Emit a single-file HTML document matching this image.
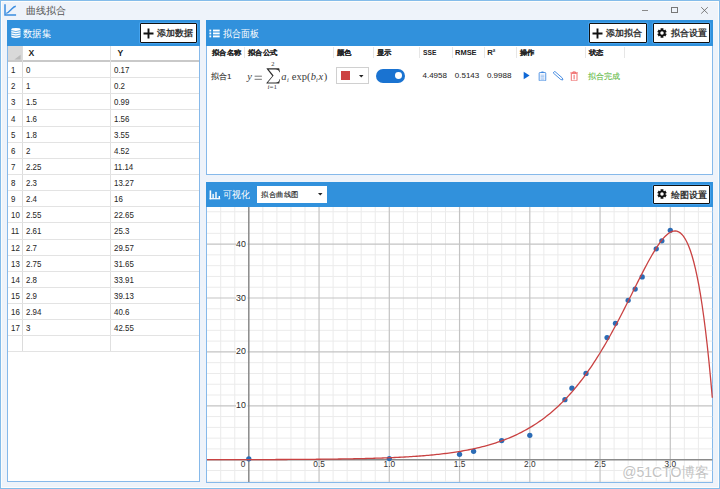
<!DOCTYPE html>
<html><head><meta charset="utf-8">
<style>
*{margin:0;padding:0;box-sizing:border-box}
html,body{width:720px;height:489px;overflow:hidden}
body{position:relative;background:#eef3fa;font-family:"Liberation Sans",sans-serif;color:#333}
.a{position:absolute}
.win{left:0;top:0;width:720px;height:489px;border:1px solid #84bcea;box-shadow:inset 0 0 0 1px #fdfdfb}
.title{left:25.5px;top:4px;font-size:9.5px;color:#555;line-height:13px}
.panel{background:#fff;border:1px solid #86b9ea}
.hdr{background:#3191dc;color:#fff}
.htxt{font-size:10px;line-height:12px;color:#fff}
.btn{background:#fff;border:1.7px solid #121212;border-radius:1px;box-shadow:0 0 0 1px #45a3ee;font-size:9.5px;line-height:15px;color:#222;font-weight:bold}
.th{font-weight:bold;font-size:8px;color:#222}
.td{font-size:8.5px;color:#2a2a2a;-webkit-text-stroke-width:0.05px}
.tv{transform:scaleX(0.93);transform-origin:0 0}
.hl{height:1px;background:#e3e3e3}
.vl{width:1px;background:#e3e3e3}
svg line.mi{stroke:#ebebeb;stroke-width:1}
svg line.ma{stroke:#c3c3c3;stroke-width:1.2}
svg line.ax{stroke:#8a8a8a;stroke-width:1.5}
svg polyline.cv{fill:none;stroke:#c94242;stroke-width:1.3}
svg circle{fill:#2c6cb5}
</style></head><body>
<div class="a win"></div>
<svg class="a" style="left:3px;top:3px" width="15" height="15" viewBox="0 0 15 15"><path d="M2 1.3V12.1H13.1" fill="none" stroke="#3a8de0" stroke-width="1.5"/><path d="M3.2 10.4C5.2 10.1 6.6 8 8.2 6.4S11 3.4 12.8 3.2" fill="none" stroke="#3a8de0" stroke-width="1.4"/></svg>
<div class="a title">曲线拟合</div>
<div class="a" style="left:642px;top:9.6px;width:6px;height:1.2px;background:#8a8a8a"></div>
<div class="a" style="left:671.2px;top:7.3px;width:6.8px;height:6px;border:1px solid #777"></div>
<svg class="a" style="left:700px;top:6px" width="10" height="10" viewBox="0 0 10 10"><path d="M1.2 1.2L7.8 7.6M7.8 1.2L1.2 7.6" stroke="#666" stroke-width="0.85"/></svg>
<div class="a panel" style="left:7px;top:20px;width:193px;height:462px"></div>
<div class="a hdr" style="left:7px;top:20px;width:193px;height:25.5px"></div>
<svg class="a" style="left:10.5px;top:28px" width="10" height="10" viewBox="0 0 10 10"><path d="M0.3 1.5A4.6 1.45 0 0 1 9.5 1.5V8.5A4.6 1.45 0 0 1 0.3 8.5Z" fill="#fff"/><path d="M0.2 2.5Q4.9 4.6 9.6 2.5M0.2 4.9Q4.9 6.6 9.6 4.9M0.2 7.2Q4.9 9 9.6 7.2" fill="none" stroke="#3191dc" stroke-width="0.75"/></svg>
<div class="a htxt" style="left:23.2px;top:27.8px;font-size:10px;transform:scaleX(0.93);transform-origin:0 0">数据集</div>
<div class="a btn" style="left:140px;top:23px;width:57px;height:19.5px"></div>
<svg class="a" style="left:143px;top:28px" width="11" height="11" viewBox="0 0 11 11"><path d="M5.5 0.5V10.5M0.5 5.5H10.5" stroke="#111" stroke-width="1.9"/></svg>
<div class="a" style="left:157.2px;top:26.7px;font-size:9px;line-height:12px;color:#333;font-weight:bold">添加数据</div>
<div class="a" style="left:8px;top:45.5px;width:14.5px;height:15px;background:#d9d9d9"></div>
<svg class="a" style="left:14px;top:54px" width="7" height="6" viewBox="0 0 7 6"><path d="M6.6 0.7V5.6H0.4Z" fill="#bababa"/></svg>
<div class="a" style="left:8px;top:60px;width:191px;height:1.6px;background:#c9c9c9"></div>
<div class="a th" style="left:28.6px;top:47.6px;font-size:8.6px">X</div>
<div class="a th" style="left:117.4px;top:47.6px;font-size:8.6px">Y</div>
<div class="a vl" style="left:22px;top:45.5px;height:306px;background:#dcdcdc"></div>
<div class="a vl" style="left:110px;top:45.5px;height:306px;background:#e0e0e0"></div>
<div class="a hl" style="left:8px;top:77.20px;width:191px"></div>
<div class="a td tv" style="left:10.6px;top:65.17px">1</div>
<div class="a td tv" style="left:25.8px;top:65.17px">0</div>
<div class="a td tv" style="left:113.8px;top:65.17px">0.17</div>
<div class="a hl" style="left:8px;top:93.33px;width:191px"></div>
<div class="a td tv" style="left:10.6px;top:81.30px">2</div>
<div class="a td tv" style="left:25.8px;top:81.30px">1</div>
<div class="a td tv" style="left:113.8px;top:81.30px">0.2</div>
<div class="a hl" style="left:8px;top:109.46px;width:191px"></div>
<div class="a td tv" style="left:10.6px;top:97.43px">3</div>
<div class="a td tv" style="left:25.8px;top:97.43px">1.5</div>
<div class="a td tv" style="left:113.8px;top:97.43px">0.99</div>
<div class="a hl" style="left:8px;top:125.59px;width:191px"></div>
<div class="a td tv" style="left:10.6px;top:113.56px">4</div>
<div class="a td tv" style="left:25.8px;top:113.56px">1.6</div>
<div class="a td tv" style="left:113.8px;top:113.56px">1.56</div>
<div class="a hl" style="left:8px;top:141.72px;width:191px"></div>
<div class="a td tv" style="left:10.6px;top:129.69px">5</div>
<div class="a td tv" style="left:25.8px;top:129.69px">1.8</div>
<div class="a td tv" style="left:113.8px;top:129.69px">3.55</div>
<div class="a hl" style="left:8px;top:157.85px;width:191px"></div>
<div class="a td tv" style="left:10.6px;top:145.82px">6</div>
<div class="a td tv" style="left:25.8px;top:145.82px">2</div>
<div class="a td tv" style="left:113.8px;top:145.82px">4.52</div>
<div class="a hl" style="left:8px;top:173.98px;width:191px"></div>
<div class="a td tv" style="left:10.6px;top:161.95px">7</div>
<div class="a td tv" style="left:25.8px;top:161.95px">2.25</div>
<div class="a td tv" style="left:113.8px;top:161.95px">11.14</div>
<div class="a hl" style="left:8px;top:190.11px;width:191px"></div>
<div class="a td tv" style="left:10.6px;top:178.08px">8</div>
<div class="a td tv" style="left:25.8px;top:178.08px">2.3</div>
<div class="a td tv" style="left:113.8px;top:178.08px">13.27</div>
<div class="a hl" style="left:8px;top:206.24px;width:191px"></div>
<div class="a td tv" style="left:10.6px;top:194.21px">9</div>
<div class="a td tv" style="left:25.8px;top:194.21px">2.4</div>
<div class="a td tv" style="left:113.8px;top:194.21px">16</div>
<div class="a hl" style="left:8px;top:222.37px;width:191px"></div>
<div class="a td tv" style="left:10.6px;top:210.34px">10</div>
<div class="a td tv" style="left:25.8px;top:210.34px">2.55</div>
<div class="a td tv" style="left:113.8px;top:210.34px">22.65</div>
<div class="a hl" style="left:8px;top:238.50px;width:191px"></div>
<div class="a td tv" style="left:10.6px;top:226.47px">11</div>
<div class="a td tv" style="left:25.8px;top:226.47px">2.61</div>
<div class="a td tv" style="left:113.8px;top:226.47px">25.3</div>
<div class="a hl" style="left:8px;top:254.63px;width:191px"></div>
<div class="a td tv" style="left:10.6px;top:242.60px">12</div>
<div class="a td tv" style="left:25.8px;top:242.60px">2.7</div>
<div class="a td tv" style="left:113.8px;top:242.60px">29.57</div>
<div class="a hl" style="left:8px;top:270.76px;width:191px"></div>
<div class="a td tv" style="left:10.6px;top:258.73px">13</div>
<div class="a td tv" style="left:25.8px;top:258.73px">2.75</div>
<div class="a td tv" style="left:113.8px;top:258.73px">31.65</div>
<div class="a hl" style="left:8px;top:286.89px;width:191px"></div>
<div class="a td tv" style="left:10.6px;top:274.86px">14</div>
<div class="a td tv" style="left:25.8px;top:274.86px">2.8</div>
<div class="a td tv" style="left:113.8px;top:274.86px">33.91</div>
<div class="a hl" style="left:8px;top:303.02px;width:191px"></div>
<div class="a td tv" style="left:10.6px;top:290.99px">15</div>
<div class="a td tv" style="left:25.8px;top:290.99px">2.9</div>
<div class="a td tv" style="left:113.8px;top:290.99px">39.13</div>
<div class="a hl" style="left:8px;top:319.15px;width:191px"></div>
<div class="a td tv" style="left:10.6px;top:307.12px">16</div>
<div class="a td tv" style="left:25.8px;top:307.12px">2.94</div>
<div class="a td tv" style="left:113.8px;top:307.12px">40.6</div>
<div class="a hl" style="left:8px;top:335.28px;width:191px"></div>
<div class="a td tv" style="left:10.6px;top:323.25px">17</div>
<div class="a td tv" style="left:25.8px;top:323.25px">3</div>
<div class="a td tv" style="left:113.8px;top:323.25px">42.55</div>
<div class="a hl" style="left:8px;top:351.41px;width:191px"></div>
<div class="a panel" style="left:206px;top:20px;width:507px;height:155px"></div>
<div class="a hdr" style="left:206px;top:20px;width:507px;height:25.5px"></div>
<svg class="a" style="left:209px;top:28.5px" width="11" height="9" viewBox="0 0 11 9"><g fill="#fff"><rect x="0.4" y="0.6" width="1.8" height="1.85"/><rect x="0.4" y="3.5" width="1.8" height="1.85"/><rect x="0.4" y="6.5" width="1.8" height="1.85"/><rect x="4" y="0.6" width="6.7" height="1.85"/><rect x="4" y="3.5" width="6.7" height="1.85"/><rect x="4" y="6.5" width="6.7" height="1.85"/></g></svg>
<div class="a htxt" style="left:223.2px;top:27.8px;font-size:10px;transform:scaleX(0.89);transform-origin:0 0">拟合面板</div>
<div class="a btn" style="left:588.5px;top:23px;width:58px;height:19.5px"></div>
<svg class="a" style="left:592px;top:28px" width="11" height="11" viewBox="0 0 11 11"><path d="M5.5 0.5V10.5M0.5 5.5H10.5" stroke="#111" stroke-width="1.9"/></svg>
<div class="a" style="left:606.3px;top:26.7px;font-size:9px;line-height:12px;color:#333;font-weight:bold">添加拟合</div>
<div class="a btn" style="left:653px;top:23px;width:56.5px;height:19.5px"></div>
<svg class="a" style="left:656.5px;top:27.8px" width="10" height="10" viewBox="0 0 10 10"><path fill="#111" fill-rule="evenodd" d="M6.39 1.73 L6.42 0.36 L3.58 0.36 L3.61 1.73 L2.86 2.16 L1.69 1.45 L0.27 3.91 L1.48 4.57 L1.48 5.43 L0.27 6.09 L1.69 8.55 L2.86 7.84 L3.61 8.27 L3.58 9.64 L6.42 9.64 L6.39 8.27 L7.14 7.84 L8.31 8.55 L9.73 6.09 L8.52 5.43 L8.52 4.57 L9.73 3.91 L8.31 1.45 L7.14 2.16Z M5 3.25A1.75 1.75 0 1 0 5 6.75A1.75 1.75 0 1 0 5 3.25Z"/></svg>
<div class="a" style="left:670.8px;top:26.7px;font-size:9px;line-height:12px;color:#333;font-weight:bold">拟合设置</div>
<div class="a th" style="left:211.5px;top:48.9px;font-size:8px;line-height:10px;transform:scale(0.92,0.88);transform-origin:0 0;-webkit-text-stroke-width:0.08px">拟合名称</div>
<div class="a th" style="left:247.5px;top:48.9px;font-size:8px;line-height:10px;transform:scale(0.92,0.88);transform-origin:0 0;-webkit-text-stroke-width:0.08px">拟合公式</div>
<div class="a th" style="left:336.5px;top:48.9px;font-size:8px;line-height:10px;transform:scale(0.92,0.88);transform-origin:0 0;-webkit-text-stroke-width:0.08px">颜色</div>
<div class="a th" style="left:377.0px;top:48.9px;font-size:8px;line-height:10px;transform:scale(0.92,0.88);transform-origin:0 0;-webkit-text-stroke-width:0.08px">显示</div>
<div class="a th" style="left:423px;top:47.9px;font-size:7.7px;line-height:10px;transform:scaleX(0.867);transform-origin:0 0">SSE</div>
<div class="a th" style="left:455.3px;top:47.9px;font-size:7.7px;line-height:10px;transform:scaleX(0.973);transform-origin:0 0">RMSE</div>
<div class="a th" style="left:487.2px;top:47.9px;font-size:7.7px;line-height:10px">R²</div>
<div class="a th" style="left:519.9px;top:48.9px;font-size:8px;line-height:10px;transform:scale(0.92,0.88);transform-origin:0 0;-webkit-text-stroke-width:0.08px">操作</div>
<div class="a th" style="left:588.5px;top:48.9px;font-size:8px;line-height:10px;transform:scale(0.92,0.88);transform-origin:0 0;-webkit-text-stroke-width:0.08px">状态</div>
<div class="a vl" style="left:243.70px;top:46.5px;height:11px;background:#e6e6e6"></div>
<div class="a vl" style="left:333.25px;top:46.5px;height:11px;background:#e6e6e6"></div>
<div class="a vl" style="left:373.00px;top:46.5px;height:11px;background:#e6e6e6"></div>
<div class="a vl" style="left:419.25px;top:46.5px;height:11px;background:#e6e6e6"></div>
<div class="a vl" style="left:452.00px;top:46.5px;height:11px;background:#e6e6e6"></div>
<div class="a vl" style="left:484.25px;top:46.5px;height:11px;background:#e6e6e6"></div>
<div class="a vl" style="left:516.00px;top:46.5px;height:11px;background:#e6e6e6"></div>
<div class="a vl" style="left:585.10px;top:46.5px;height:11px;background:#e6e6e6"></div>
<div class="a vl" style="left:623.90px;top:46.5px;height:11px;background:#e6e6e6"></div>
<div class="a td" style="left:211px;top:72px;font-size:8px;line-height:10px;-webkit-text-stroke-width:0.1px">拟合1</div>
<div class="a" style="left:0;top:0;width:1px;height:1px;font-family:'Liberation Serif',serif;color:#3a3a3a">
<span class="a" style="left:247.3px;top:71px;font-size:10.5px;line-height:12px;font-style:italic">y</span>
<svg class="a" style="left:254px;top:75px" width="9" height="5" viewBox="0 0 9 5"><path d="M0.6 1.2H7.9M0.6 4.3H7.9" stroke="#3a3a3a" stroke-width="0.7"/></svg>
<svg class="a" style="left:265.5px;top:68px" width="15" height="16" viewBox="0 0 15 16"><path fill="#2e2e2e" d="M0.6 0.2H13.2L14 4.2H13.4C12.9 2.3 12 1.4 9.4 1.4H2.7L7.6 7.6L1.9 14.4H9.6C12.1 14.4 13 13.5 13.5 11.3H14.1L13.2 15.4H0.4V14.9L6.3 8.1L0.6 0.8Z"/></svg>
<span class="a" style="left:271.3px;top:59.8px;font-size:6.5px;line-height:7px">2</span>
<span class="a" style="left:267.6px;top:83.6px;font-size:7px;line-height:7px"><i>i</i>=1</span>
<span class="a" style="left:281.3px;top:71.2px;font-size:10.5px;line-height:12px;font-style:italic">a</span>
<span class="a" style="left:287px;top:75.8px;font-size:6.3px;line-height:7px;font-style:italic">i</span>
<span class="a" style="left:291.8px;top:71.2px;font-size:10.5px;line-height:12px">exp(</span>
<span class="a" style="left:310.8px;top:71.2px;font-size:10.5px;line-height:12px;font-style:italic">b</span>
<span class="a" style="left:316px;top:75.5px;font-size:6.3px;line-height:7px;font-style:italic">i</span>
<span class="a" style="left:318.6px;top:71.2px;font-size:10.5px;line-height:12px;font-style:italic">x</span>
<span class="a" style="left:323.8px;top:71.2px;font-size:10.5px;line-height:12px">)</span>
</div>
<div class="a" style="left:336px;top:67px;width:32.5px;height:17px;border:1px solid #d0d0d0;background:#fff"></div>
<div class="a" style="left:341px;top:70.8px;width:9.3px;height:9.3px;background:#cc4444"></div>
<svg class="a" style="left:358.5px;top:74.5px" width="5" height="3" viewBox="0 0 5 3"><path d="M0 0H4.5L2.25 2.6Z" fill="#222"/></svg>
<div class="a" style="left:376.3px;top:69.3px;width:28.7px;height:13.3px;border-radius:7px;background:#1a73d1"></div>
<div class="a" style="left:395px;top:72.3px;width:6.9px;height:6.9px;border-radius:50%;background:#fff"></div>
<div class="a td" style="left:422.5px;top:71.3px;font-size:8px;line-height:10px">4.4958</div>
<div class="a td" style="left:454.8px;top:71.3px;font-size:8px;line-height:10px">0.5143</div>
<div class="a td" style="left:486.9px;top:71.3px;font-size:8px;line-height:10px">0.9988</div>
<svg class="a" style="left:522.5px;top:71px" width="8" height="9" viewBox="0 0 8 9"><path d="M0.7 0.8L6.6 4.55L0.7 8.3Z" fill="#0f68d6"/></svg>
<svg class="a" style="left:537.5px;top:70.5px" width="9" height="10.5" viewBox="0 0 9 10.5"><rect x="1.15" y="1.5" width="6.6" height="8.4" rx="0.7" fill="#f4f8fe" stroke="#3f88e0" stroke-width="0.85"/><rect x="3.2" y="0.5" width="2.5" height="1.6" rx="0.4" fill="#3f88e0"/><path d="M2.6 4.2H6.3M2.6 5.6H6.3M2.6 7H6.3M2.6 8.3H6.3" stroke="#8ab6ee" stroke-width="0.7"/></svg>
<svg class="a" style="left:552.5px;top:70.5px" width="11" height="10" viewBox="0 0 11 10"><g transform="translate(5.4 5) rotate(41)"><path d="M-5.9 -1.1H4.2L6 0L4.2 1.1H-5.9Z" fill="none" stroke="#3d86df" stroke-width="0.85"/></g></svg>
<svg class="a" style="left:569.5px;top:70.5px" width="9" height="10.5" viewBox="0 0 9 10.5"><path d="M0.3 1.9H8M2.9 1.9V0.9H5.4V1.9" fill="none" stroke="#ee6262" stroke-width="0.9"/><rect x="1.3" y="2.3" width="5.7" height="7.6" rx="0.6" fill="none" stroke="#ee6262" stroke-width="0.9"/><rect x="3.4" y="3.8" width="1.5" height="4.6" fill="#f49a9a"/></svg>
<div class="a td" style="left:588px;top:72px;font-size:8px;line-height:10px;color:#62b946;-webkit-text-stroke-width:0.1px">拟合完成</div>
<div class="a panel" style="left:206px;top:182px;width:507px;height:301px"></div>
<div class="a hdr" style="left:206px;top:182px;width:507px;height:24.6px"></div>
<svg class="a" style="left:208.5px;top:189.5px" width="12" height="10" viewBox="0 0 12 10"><g fill="#fff"><rect x="0.6" y="0.4" width="1.6" height="8.9"/><rect x="0.6" y="8.1" width="10.6" height="1.2"/><rect x="3.4" y="3.9" width="1.4" height="4.5"/><rect x="6.3" y="1.9" width="1.4" height="6.5"/><rect x="9.6" y="6" width="1.4" height="2.4"/></g></svg>
<div class="a htxt" style="left:223.2px;top:188.8px;font-size:10px;transform:scaleX(0.9);transform-origin:0 0">可视化</div>
<div class="a" style="left:256.5px;top:186px;width:70.5px;height:16.5px;background:#fff"></div>
<div class="a" style="left:260.9px;top:190.6px;font-size:8px;transform:scale(0.94,0.9);transform-origin:0 0;-webkit-text-stroke-width:0.15px;line-height:10px;color:#222">拟合曲线图</div>
<svg class="a" style="left:317.5px;top:193px" width="5" height="3" viewBox="0 0 5 3"><path d="M0 0H4.5L2.25 2.6Z" fill="#222"/></svg>
<div class="a btn" style="left:652.8px;top:185px;width:57.2px;height:19px"></div>
<svg class="a" style="left:656.7px;top:189px" width="10" height="10" viewBox="0 0 10 10"><path fill="#111" fill-rule="evenodd" d="M6.39 1.73 L6.42 0.36 L3.58 0.36 L3.61 1.73 L2.86 2.16 L1.69 1.45 L0.27 3.91 L1.48 4.57 L1.48 5.43 L0.27 6.09 L1.69 8.55 L2.86 7.84 L3.61 8.27 L3.58 9.64 L6.42 9.64 L6.39 8.27 L7.14 7.84 L8.31 8.55 L9.73 6.09 L8.52 5.43 L8.52 4.57 L9.73 3.91 L8.31 1.45 L7.14 2.16Z M5 3.25A1.75 1.75 0 1 0 5 6.75A1.75 1.75 0 1 0 5 3.25Z"/></svg>
<div class="a" style="left:670.6px;top:188.5px;font-size:9px;line-height:12px;color:#333;font-weight:bold">绘图设置</div>
<svg class="a" style="left:0;top:0" width="720" height="489" viewBox="0 0 720 489"><line class="mi" x1="220.70" y1="207" x2="220.70" y2="482"/>
<line class="mi" x1="234.75" y1="207" x2="234.75" y2="482"/>
<line class="mi" x1="262.85" y1="207" x2="262.85" y2="482"/>
<line class="mi" x1="276.90" y1="207" x2="276.90" y2="482"/>
<line class="mi" x1="290.95" y1="207" x2="290.95" y2="482"/>
<line class="mi" x1="305.00" y1="207" x2="305.00" y2="482"/>
<line class="mi" x1="333.10" y1="207" x2="333.10" y2="482"/>
<line class="mi" x1="347.15" y1="207" x2="347.15" y2="482"/>
<line class="mi" x1="361.20" y1="207" x2="361.20" y2="482"/>
<line class="mi" x1="375.25" y1="207" x2="375.25" y2="482"/>
<line class="mi" x1="403.35" y1="207" x2="403.35" y2="482"/>
<line class="mi" x1="417.40" y1="207" x2="417.40" y2="482"/>
<line class="mi" x1="431.45" y1="207" x2="431.45" y2="482"/>
<line class="mi" x1="445.50" y1="207" x2="445.50" y2="482"/>
<line class="mi" x1="473.60" y1="207" x2="473.60" y2="482"/>
<line class="mi" x1="487.65" y1="207" x2="487.65" y2="482"/>
<line class="mi" x1="501.70" y1="207" x2="501.70" y2="482"/>
<line class="mi" x1="515.75" y1="207" x2="515.75" y2="482"/>
<line class="mi" x1="543.85" y1="207" x2="543.85" y2="482"/>
<line class="mi" x1="557.90" y1="207" x2="557.90" y2="482"/>
<line class="mi" x1="571.95" y1="207" x2="571.95" y2="482"/>
<line class="mi" x1="586.00" y1="207" x2="586.00" y2="482"/>
<line class="mi" x1="614.10" y1="207" x2="614.10" y2="482"/>
<line class="mi" x1="628.15" y1="207" x2="628.15" y2="482"/>
<line class="mi" x1="642.20" y1="207" x2="642.20" y2="482"/>
<line class="mi" x1="656.25" y1="207" x2="656.25" y2="482"/>
<line class="mi" x1="684.35" y1="207" x2="684.35" y2="482"/>
<line class="mi" x1="698.40" y1="207" x2="698.40" y2="482"/>
<line class="mi" x1="207" y1="481.26" x2="712.3" y2="481.26"/>
<line class="mi" x1="207" y1="470.48" x2="712.3" y2="470.48"/>
<line class="mi" x1="207" y1="448.92" x2="712.3" y2="448.92"/>
<line class="mi" x1="207" y1="438.14" x2="712.3" y2="438.14"/>
<line class="mi" x1="207" y1="427.36" x2="712.3" y2="427.36"/>
<line class="mi" x1="207" y1="416.58" x2="712.3" y2="416.58"/>
<line class="mi" x1="207" y1="395.02" x2="712.3" y2="395.02"/>
<line class="mi" x1="207" y1="384.24" x2="712.3" y2="384.24"/>
<line class="mi" x1="207" y1="373.46" x2="712.3" y2="373.46"/>
<line class="mi" x1="207" y1="362.68" x2="712.3" y2="362.68"/>
<line class="mi" x1="207" y1="341.12" x2="712.3" y2="341.12"/>
<line class="mi" x1="207" y1="330.34" x2="712.3" y2="330.34"/>
<line class="mi" x1="207" y1="319.56" x2="712.3" y2="319.56"/>
<line class="mi" x1="207" y1="308.78" x2="712.3" y2="308.78"/>
<line class="mi" x1="207" y1="287.22" x2="712.3" y2="287.22"/>
<line class="mi" x1="207" y1="276.44" x2="712.3" y2="276.44"/>
<line class="mi" x1="207" y1="265.66" x2="712.3" y2="265.66"/>
<line class="mi" x1="207" y1="254.88" x2="712.3" y2="254.88"/>
<line class="mi" x1="207" y1="233.32" x2="712.3" y2="233.32"/>
<line class="mi" x1="207" y1="222.54" x2="712.3" y2="222.54"/>
<line class="mi" x1="207" y1="211.76" x2="712.3" y2="211.76"/>
<line class="ma" x1="319.05" y1="207" x2="319.05" y2="482"/>
<line class="ma" x1="389.30" y1="207" x2="389.30" y2="482"/>
<line class="ma" x1="459.55" y1="207" x2="459.55" y2="482"/>
<line class="ma" x1="529.80" y1="207" x2="529.80" y2="482"/>
<line class="ma" x1="600.05" y1="207" x2="600.05" y2="482"/>
<line class="ma" x1="670.30" y1="207" x2="670.30" y2="482"/>
<line class="ma" x1="207" y1="405.80" x2="712.3" y2="405.80"/>
<line class="ma" x1="207" y1="351.90" x2="712.3" y2="351.90"/>
<line class="ma" x1="207" y1="298.00" x2="712.3" y2="298.00"/>
<line class="ma" x1="207" y1="244.10" x2="712.3" y2="244.10"/>
<line class="ax" x1="248.80" y1="207" x2="248.80" y2="482"/>
<line class="ax" x1="207" y1="459.70" x2="712.3" y2="459.70"/>
<circle cx="248.80" cy="458.78" r="2.65"/>
<circle cx="389.30" cy="458.62" r="2.65"/>
<circle cx="459.55" cy="454.36" r="2.65"/>
<circle cx="473.60" cy="451.29" r="2.65"/>
<circle cx="501.70" cy="440.57" r="2.65"/>
<circle cx="529.80" cy="435.34" r="2.65"/>
<circle cx="564.92" cy="399.66" r="2.65"/>
<circle cx="571.95" cy="388.17" r="2.65"/>
<circle cx="586.00" cy="373.46" r="2.65"/>
<circle cx="607.08" cy="337.62" r="2.65"/>
<circle cx="615.50" cy="323.33" r="2.65"/>
<circle cx="628.15" cy="300.32" r="2.65"/>
<circle cx="635.17" cy="289.11" r="2.65"/>
<circle cx="642.20" cy="276.93" r="2.65"/>
<circle cx="656.25" cy="248.79" r="2.65"/>
<circle cx="661.87" cy="240.87" r="2.65"/>
<circle cx="670.30" cy="230.36" r="2.65"/>
<polyline class="cv" points="207.00,459.66 208.69,459.66 210.38,459.66 212.07,459.66 213.76,459.65 215.45,459.65 217.14,459.65 218.83,459.65 220.52,459.65 222.21,459.64 223.90,459.64 225.59,459.64 227.28,459.64 228.97,459.64 230.66,459.63 232.35,459.63 234.04,459.63 235.73,459.63 237.42,459.62 239.11,459.62 240.80,459.62 242.49,459.61 244.18,459.61 245.87,459.61 247.56,459.60 249.25,459.60 250.94,459.60 252.63,459.59 254.32,459.59 256.01,459.58 257.70,459.58 259.39,459.58 261.08,459.57 262.77,459.57 264.46,459.56 266.15,459.56 267.84,459.55 269.53,459.55 271.22,459.54 272.91,459.53 274.60,459.53 276.29,459.52 277.98,459.51 279.67,459.51 281.36,459.50 283.05,459.49 284.74,459.48 286.43,459.48 288.12,459.47 289.81,459.46 291.50,459.45 293.19,459.44 294.88,459.43 296.57,459.42 298.26,459.41 299.95,459.40 301.64,459.39 303.33,459.38 305.02,459.37 306.71,459.36 308.40,459.34 310.09,459.33 311.78,459.32 313.47,459.30 315.16,459.29 316.85,459.27 318.54,459.26 320.23,459.24 321.92,459.22 323.61,459.21 325.30,459.19 326.99,459.17 328.68,459.15 330.37,459.13 332.06,459.11 333.75,459.09 335.44,459.06 337.13,459.04 338.82,459.02 340.51,458.99 342.20,458.97 343.89,458.94 345.58,458.91 347.27,458.88 348.96,458.85 350.65,458.82 352.34,458.79 354.03,458.76 355.72,458.72 357.41,458.69 359.10,458.65 360.79,458.61 362.48,458.58 364.17,458.53 365.86,458.49 367.55,458.45 369.24,458.40 370.93,458.36 372.62,458.31 374.31,458.26 376.00,458.21 377.69,458.15 379.38,458.10 381.07,458.04 382.76,457.98 384.45,457.92 386.14,457.85 387.83,457.79 389.52,457.72 391.21,457.65 392.90,457.58 394.59,457.50 396.28,457.42 397.97,457.34 399.66,457.26 401.35,457.17 403.04,457.08 404.73,456.99 406.42,456.89 408.11,456.79 409.80,456.69 411.49,456.58 413.18,456.47 414.87,456.36 416.56,456.24 418.25,456.12 419.94,455.99 421.63,455.86 423.32,455.73 425.01,455.59 426.70,455.44 428.39,455.29 430.08,455.14 431.77,454.98 433.46,454.82 435.15,454.65 436.84,454.47 438.53,454.29 440.22,454.10 441.91,453.90 443.60,453.70 445.29,453.50 446.98,453.28 448.67,453.06 450.36,452.83 452.05,452.59 453.74,452.35 455.43,452.09 457.12,451.83 458.81,451.56 460.49,451.28 462.18,451.00 463.87,450.70 465.56,450.39 467.25,450.07 468.94,449.75 470.63,449.41 472.32,449.06 474.01,448.70 475.70,448.32 477.39,447.94 479.08,447.54 480.77,447.13 482.46,446.71 484.15,446.27 485.84,445.82 487.53,445.36 489.22,444.88 490.91,444.38 492.60,443.87 494.29,443.35 495.98,442.80 497.67,442.24 499.36,441.67 501.05,441.07 502.74,440.46 504.43,439.83 506.12,439.17 507.81,438.50 509.50,437.81 511.19,437.09 512.88,436.36 514.57,435.60 516.26,434.82 517.95,434.01 519.64,433.19 521.33,432.33 523.02,431.45 524.71,430.55 526.40,429.62 528.09,428.66 529.78,427.67 531.47,426.66 533.16,425.61 534.85,424.54 536.54,423.43 538.23,422.30 539.92,421.13 541.61,419.92 543.30,418.69 544.99,417.42 546.68,416.11 548.37,414.77 550.06,413.39 551.75,411.98 553.44,410.53 555.13,409.03 556.82,407.50 558.51,405.93 560.20,404.32 561.89,402.66 563.58,400.97 565.27,399.23 566.96,397.44 568.65,395.61 570.34,393.74 572.03,391.82 573.72,389.85 575.41,387.84 577.10,385.78 578.79,383.67 580.48,381.52 582.17,379.31 583.86,377.06 585.55,374.75 587.24,372.40 588.93,369.99 590.62,367.54 592.31,365.03 594.00,362.48 595.69,359.87 597.38,357.22 599.07,354.52 600.76,351.76 602.45,348.96 604.14,346.11 605.83,343.21 607.52,340.27 609.21,337.28 610.90,334.25 612.59,331.17 614.28,328.06 615.97,324.90 617.66,321.71 619.35,318.48 621.04,315.22 622.73,311.94 624.42,308.62 626.11,305.29 627.80,301.93 629.49,298.56 631.18,295.18 632.87,291.79 634.56,288.40 636.25,285.02 637.94,281.64 639.63,278.29 641.32,274.96 643.01,271.67 644.70,268.41 646.39,265.21 648.08,262.06 649.77,258.98 651.46,255.99 653.15,253.09 654.84,250.29 656.53,247.62 658.22,245.07 659.91,242.68 661.60,240.45 663.29,238.41 664.98,236.57 666.67,234.95 668.36,233.57 670.05,232.46 671.74,231.64 673.43,231.14 675.12,230.99 676.81,231.20 678.50,231.82 680.19,232.88 681.88,234.41 683.57,236.44 685.26,239.03 686.95,242.20 688.64,246.01 690.33,250.50 692.02,255.72 693.71,261.72 695.40,268.56 697.09,276.29 698.78,284.99 700.47,294.71 702.16,305.52 703.85,317.50 705.54,330.73 707.23,345.28 708.92,361.25 710.61,378.72 712.30,397.79"/>

</svg>
<div class="a" style="left:622.3px;top:464px;font-size:14px;line-height:17px;color:#c3c3c3;text-shadow:1px 0 #fff,-1px 0 #fff,0 1px #fff,0 -1px #fff">@51CTO博客</div>
<svg class="a" style="left:0;top:0" width="720" height="489" viewBox="0 0 720 489">
<rect x="236" y="401.30" width="11.5" height="9" fill="#fff"/>
<text x="245.9" y="408.30" font-size="8.8" text-anchor="end" fill="#2a2a2a" font-family="Liberation Sans">10</text>
<rect x="236" y="347.40" width="11.5" height="9" fill="#fff"/>
<text x="245.9" y="354.40" font-size="8.8" text-anchor="end" fill="#2a2a2a" font-family="Liberation Sans">20</text>
<rect x="236" y="293.50" width="11.5" height="9" fill="#fff"/>
<text x="245.9" y="300.50" font-size="8.8" text-anchor="end" fill="#2a2a2a" font-family="Liberation Sans">30</text>
<rect x="236" y="239.60" width="11.5" height="9" fill="#fff"/>
<text x="245.9" y="246.60" font-size="8.8" text-anchor="end" fill="#2a2a2a" font-family="Liberation Sans">40</text>
<text x="245.3" y="467" font-size="8.3" text-anchor="end" fill="#333" font-family="Liberation Sans">0</text>
<text x="319.05" y="467" font-size="8.3" text-anchor="middle" fill="#333" font-family="Liberation Sans">0.5</text>
<text x="389.30" y="467" font-size="8.3" text-anchor="middle" fill="#333" font-family="Liberation Sans">1.0</text>
<text x="459.55" y="467" font-size="8.3" text-anchor="middle" fill="#333" font-family="Liberation Sans">1.5</text>
<text x="529.80" y="467" font-size="8.3" text-anchor="middle" fill="#333" font-family="Liberation Sans">2.0</text>
<text x="600.05" y="467" font-size="8.3" text-anchor="middle" fill="#333" font-family="Liberation Sans">2.5</text>
<text x="670.30" y="467" font-size="8.3" text-anchor="middle" fill="#333" font-family="Liberation Sans">3.0</text>
</svg>
</body></html>
